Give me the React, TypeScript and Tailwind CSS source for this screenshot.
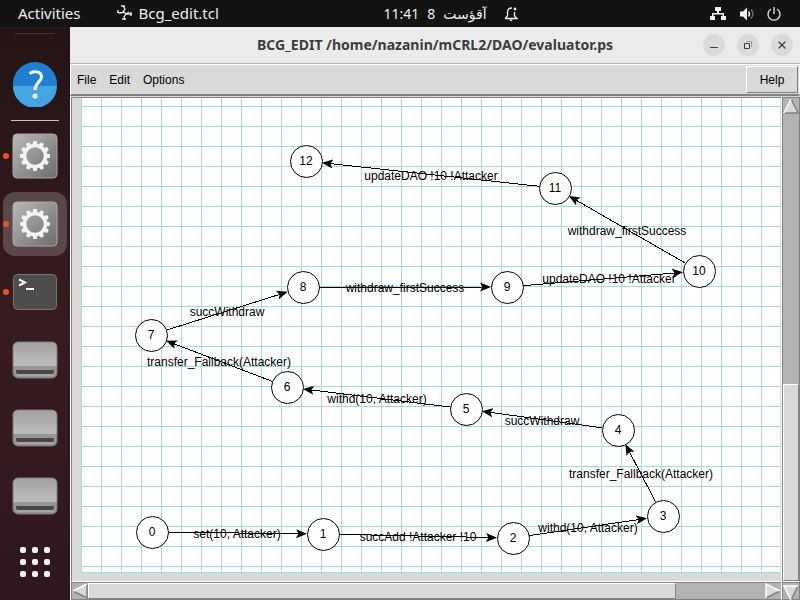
import type { ReactNode } from "react";
import { X } from "lucide-react";

type GraphNode = { id: number; x: number; y: number };
type GraphEdge = { from: number; to: number; label: string; x: number; y: number };

const nodes: GraphNode[] = [
  { id: 0, x: 71, y: 434 },
  { id: 1, x: 242, y: 436 },
  { id: 2, x: 432, y: 440 },
  { id: 3, x: 582, y: 418 },
  { id: 4, x: 537, y: 332 },
  { id: 5, x: 385, y: 311 },
  { id: 6, x: 206, y: 289 },
  { id: 7, x: 70, y: 237 },
  { id: 8, x: 222, y: 189 },
  { id: 9, x: 426, y: 189 },
  { id: 10, x: 618, y: 173 },
  { id: 11, x: 474, y: 90 },
  { id: 12, x: 225, y: 63 },
];

const edges: GraphEdge[] = [
  { from: 0, to: 1, label: "set(10, Attacker)", x: 156, y: 440 },
  { from: 1, to: 2, label: "succAdd !Attacker !10", x: 337, y: 443 },
  { from: 2, to: 3, label: "withd(10, Attacker)", x: 507, y: 434 },
  { from: 3, to: 4, label: "transfer_Fallback(Attacker)", x: 560, y: 380 },
  { from: 4, to: 5, label: "succWithdraw", x: 461, y: 327 },
  { from: 5, to: 6, label: "withd(10, Attacker)", x: 296, y: 305 },
  { from: 6, to: 7, label: "transfer_Fallback(Attacker)", x: 138, y: 268 },
  { from: 7, to: 8, label: "succWithdraw", x: 146, y: 218 },
  { from: 8, to: 9, label: "withdraw_firstSuccess", x: 324, y: 194 },
  { from: 9, to: 10, label: "updateDAO !10 !Attacker", x: 528, y: 185 },
  { from: 10, to: 11, label: "withdraw_firstSuccess", x: 546, y: 137 },
  { from: 11, to: 12, label: "updateDAO !10 !Attacker", x: 350, y: 82 },
];

const RADIUS = 16;

function Edge({ edge }: { edge: GraphEdge }) {
  const a = nodes[edge.from];
  const b = nodes[edge.to];
  const length = Math.hypot(b.x - a.x, b.y - a.y);
  const ux = (b.x - a.x) / length;
  const uy = (b.y - a.y) / length;
  return (
    <g>
      <line
        x1={a.x + ux * RADIUS}
        y1={a.y + uy * RADIUS}
        x2={b.x - ux * (RADIUS + 4)}
        y2={b.y - uy * (RADIUS + 4)}
        stroke="black"
        markerEnd="url(#arrow)"
        shapeRendering="crispEdges"
      />
      <text x={edge.x} y={edge.y} textAnchor="middle">
        {edge.label}
      </text>
    </g>
  );
}

function Graph() {
  return (
    <svg
      role="img"
      aria-label="Transition graph"
      className="block h-full w-full bg-white font-['Liberation_Sans',Arial,sans-serif] text-xs"
    >
      <defs>
        <pattern id="grid" width="20" height="20" y="8" patternUnits="userSpaceOnUse">
          <path d="M0 .5H20M.5 0V20" stroke="#a8d8e2" fill="none" />
        </pattern>
        <marker
          id="arrow"
          markerUnits="userSpaceOnUse"
          markerWidth="12"
          markerHeight="10"
          refX="7"
          refY="5"
          orient="auto"
        >
          <path d="M0 .5L11 5L0 9.5L2.5 5Z" />
        </marker>
      </defs>
      <rect width="100%" height="100%" fill="url(#grid)" />
      {edges.map((edge) => (
        <Edge key={edge.from} edge={edge} />
      ))}
      {nodes.map((node) => (
        <g key={node.id}>
          <circle cx={node.x + 0.5} cy={node.y + 0.5} r={RADIUS} fill="white" stroke="black" />
          <text x={node.x} y={node.y + 4} textAnchor="middle">
            {node.id}
          </text>
        </g>
      ))}
    </svg>
  );
}

function BranchIcon() {
  return (
    <svg viewBox="0 0 16 16" className="size-4" fill="none" stroke="#eeeeee" strokeWidth="1.3">
      <path d="M6 1L8 4L6 7M4 1H8M0 7L3 8L7 7L9 9H15M9 9L12 7M9 9L7 12L8 15M5 14H9M1 5V8M14 7V11" />
    </svg>
  );
}

function BellIcon() {
  return (
    <svg viewBox="0 0 16 16" className="size-4" fill="none" stroke="#f0f0f0" strokeWidth="1.3">
      <path d="M2 12.500L4.500 10V6C4.500 3 6 2 9 2M11.500 6V10L14 12.500H2" />
      <circle cx="12" cy="3" r="1.4" fill="#f0f0f0" stroke="none" />
      <path d="M6 13.5H10L8 15.5Z" fill="#f0f0f0" stroke="none" />
    </svg>
  );
}

function NetworkIcon() {
  return (
    <svg viewBox="0 0 16 16" className="size-4" fill="#f0f0f0">
      <path d="M5 1H11V5H9V7H14V10H16V14H11V10H12.5V8.5H3.5V10H5V14H0V10H2V7H7V5H5Z" />
    </svg>
  );
}

function VolumeIcon() {
  return (
    <svg viewBox="0 0 16 16" className="size-4" fill="none">
      <path d="M2 5.500H5L9 1.500V14.500L5 10.500H2Z" fill="#f0f0f0" />
      <path d="M10.500 5.500Q12.500 8 10.500 10.500" stroke="#f0f0f0" strokeWidth="1.500" />
      <path d="M13 3.500Q17 8 13 12.500" stroke="#777" strokeWidth="1.300" />
    </svg>
  );
}

function PowerIcon() {
  return (
    <svg viewBox="0 0 16 16" className="size-4" fill="none" stroke="#f0f0f0" strokeWidth="1.300">
      <path d="M5 3A6 6 0 1 0 11 3M8 1V8" />
    </svg>
  );
}

function TopBar() {
  return (
    <header className="grid h-[27px] shrink-0 grid-cols-3 items-center bg-[#131313] text-sm text-[#eeeeee]">
      <div className="flex items-center gap-9 pl-[18px] text-[15px]">
        <button type="button">Activities</button>
        <button type="button" className="flex items-center gap-1.5 whitespace-nowrap">
          <BranchIcon />
          Bcg_edit.tcl
        </button>
      </div>
      <button type="button" className="flex items-center justify-center gap-2 whitespace-nowrap pl-[102px]">
        <span>11:41</span>
        <span>8</span>
        <span dir="rtl" lang="az">آقؤست</span>
        <span className="pl-2"><BellIcon /></span>
      </button>
      <div className="flex items-center justify-end gap-3 pr-[18px]">
        <button type="button" aria-label="Network"><NetworkIcon /></button>
        <button type="button" aria-label="Volume"><VolumeIcon /></button>
        <button type="button" aria-label="Power"><PowerIcon /></button>
      </div>
    </header>
  );
}

const teeth = Array.from({ length: 12 }, (_, i) => i * 30);

function GearIcon() {
  return (
    <svg viewBox="0 0 46 46" className="size-[46px]">
      <defs>
        <linearGradient id="metal" x1="0" y1="0" x2="1" y2="1">
          <stop offset="0" stopColor="#b9b9b9" />
          <stop offset="1" stopColor="#6c6c6c" />
        </linearGradient>
      </defs>
      <rect x="1" y="1" width="44" height="44" rx="4" fill="url(#metal)" stroke="#aaa" />
      <circle cx="23" cy="23" r="10.500" fill="none" stroke="#f4f3f0" strokeWidth="3.500" />
      {teeth.map((angle) => (
        <path
          key={angle}
          d="M20.500 12L21.300 8H24.700L25.500 12Z"
          fill="#f4f3f0"
          transform={`rotate(${angle} 23 23)`}
        />
      ))}
    </svg>
  );
}

function DriveIcon() {
  return (
    <svg viewBox="0 0 46 38" className="h-[38px] w-[46px]">
      <defs>
        <linearGradient id="drive" x1="0" y1="0" x2="0" y2="1">
          <stop offset="0" stopColor="#a2a2a2" />
          <stop offset="1" stopColor="#bcbcbc" />
        </linearGradient>
      </defs>
      <rect x="1" y="1" width="44" height="36" rx="5" fill="#969696" stroke="#777" />
      <path d="M1.500 25V6Q1.500 1.500 6 1.500H40Q44.500 1.500 44.500 6V25Z" fill="url(#drive)" />
      <path d="M4 29H42V31Q42 33 40 33H6Q4 33 4 31Z" fill="#474747" />
      <path d="M5 34H41" stroke="#b5b5b5" />
    </svg>
  );
}

function TerminalIcon() {
  return (
    <svg viewBox="0 0 46 38" className="h-[38px] w-[46px]">
      <rect x="1.500" y="1.500" width="43" height="35" rx="4" fill="#4c4c4c" stroke="#777" />
      <path d="M7 6.500L13 9.500L7 12.500M14 16H22" fill="none" stroke="white" strokeWidth="2" />
    </svg>
  );
}

function HelpIcon() {
  return (
    <svg viewBox="0 0 46 46" className="size-[46px]">
      <circle cx="23" cy="23" r="22" fill="#1f80d3" />
      <path d="M1 25A22 22 0 0 0 45 25Z" fill="#45a4e3" />
      <path
        d="M17.500 12.500C21 10 29.500 9.500 29.500 16C29.500 21 23 21.500 23 29"
        fill="none"
        stroke="white"
        strokeWidth="3"
      />
      <circle cx="23" cy="35" r="2.500" fill="white" />
    </svg>
  );
}

function DockItem({
  label,
  running = false,
  active = false,
  children,
}: {
  label: string;
  running?: boolean;
  active?: boolean;
  children: ReactNode;
}) {
  return (
    <div className="flex h-[68px] w-full shrink-0 items-center">
      <span
        className={running ? "z-10 ml-[3px] size-1.5 rounded-full bg-[#e95420]" : "ml-[3px] w-1.5"}
      />
      <button
        type="button"
        aria-label={label}
        className={
          active
            ? "-ml-1.5 flex size-16 items-center justify-center rounded-xl bg-white/20"
            : "-ml-1.5 flex size-16 items-center justify-center"
        }
      >
        {children}
      </button>
    </div>
  );
}

function Dock() {
  return (
    <nav className="flex w-[70px] shrink-0 flex-col items-center bg-linear-to-b from-[#231414] via-[#371c1f] to-[#2d1820]">
      <div className="mt-[6px] h-px w-10 shrink-0 bg-[#4d2c25]" />
      <div className="mt-4 flex w-full flex-col">
        <DockItem label="Help"><HelpIcon /></DockItem>
      </div>
      <hr className="mt-0.5 w-12 border-[#c9c2c0]" />
      <div className="mt-px flex w-full flex-col">
        <DockItem label="Bcg edit" running><GearIcon /></DockItem>
        <DockItem label="Bcg edit window" running active><GearIcon /></DockItem>
        <DockItem label="Terminal" running><TerminalIcon /></DockItem>
        <DockItem label="Drive 1"><DriveIcon /></DockItem>
        <DockItem label="Drive 2"><DriveIcon /></DockItem>
        <DockItem label="Drive 3"><DriveIcon /></DockItem>
      </div>
      <button type="button" aria-label="Show applications" className="mt-[17px] grid grid-cols-3 gap-1.5">
        {Array.from({ length: 9 }, (_, i) => (
          <span key={i} className="size-1.5 rounded-[2px] bg-[#f2f0f0]" />
        ))}
      </button>
    </nav>
  );
}

function TitleBar() {
  const round = "flex size-[22px] items-center justify-center rounded-full bg-[#dadada] text-[#3d3d3d]";
  return (
    <div className="grid h-[37px] shrink-0 grid-cols-[1fr_auto_1fr] items-center border-b border-[#b6b6b6] bg-[#ebebeb]">
      <h1 className="col-start-2 whitespace-nowrap text-sm font-bold text-[#3d3d3d]">
        BCG_EDIT /home/nazanin/mCRL2/DAO/evaluator.ps
      </h1>
      <div className="flex justify-end gap-3 pr-[7px]">
        <button type="button" aria-label="Minimize" className={round}>
          <span className="mt-1 h-px w-2 bg-[#3d3d3d]" />
        </button>
        <button type="button" aria-label="Restore" className={round}>
          <svg viewBox="0 0 8 8" className="size-2" fill="none" stroke="currentColor">
            <path d="M.5 2.500H5.500V7.500H.5Z" />
            <path d="M2 .5H7.500V6" stroke="#999" />
          </svg>
        </button>
        <button type="button" aria-label="Close" className={round}>
          <X className="size-3" strokeWidth={2.5} />
        </button>
      </div>
    </div>
  );
}

function MenuBar() {
  return (
    <div className="flex h-8 shrink-0 items-center border border-b-2 border-white border-b-[#828282] bg-[#d9d9d9] font-['Liberation_Sans',Arial,sans-serif] text-xs text-black">
      <div className="flex gap-[13px] pl-1.5">
        <button type="button">File</button>
        <button type="button">Edit</button>
        <button type="button">Options</button>
      </div>
      <button
        type="button"
        className="ml-auto mr-px h-[27px] w-[52px] border border-b-[#828282] border-l-white border-r-[#828282] border-t-white"
      >
        Help
      </button>
    </div>
  );
}

function ScrollArrow({ direction }: { direction: "up" | "down" | "left" | "right" }) {
  const shapes = {
    up: ["M8 1L1 15", "M1 15H15L8 1"],
    down: ["M15 1H1L8 15", "M8 15L15 1"],
    left: ["M15 1L1 8", "M1 8L15 15V1"],
    right: ["M1 15V1L15 8", "M15 8L1 15"],
  };
  const [light, dark] = shapes[direction];
  const body = {
    up: "M8 1L15 15H1Z",
    down: "M1 1H15L8 15Z",
    left: "M15 1V15L1 8Z",
    right: "M1 1L15 8L1 15Z",
  };
  return (
    <button type="button" aria-label={`Scroll ${direction}`} className="size-4 shrink-0">
      <svg viewBox="0 0 16 16" className="size-4" fill="none" strokeWidth="1.500">
        <path d={body[direction]} fill="#d9d9d9" />
        <path d={dark} stroke="#828282" />
        <path d={light} stroke="white" />
      </svg>
    </button>
  );
}

export default function App() {
  return (
    <div className="flex h-screen flex-col overflow-hidden font-['Noto_Sans','DejaVu_Sans',sans-serif]">
      <TopBar />
      <div className="flex min-h-0 flex-1">
        <Dock />
        <main className="flex min-w-0 flex-1 flex-col bg-[#d9d9d9]">
          <TitleBar />
          <MenuBar />
          <div className="grid min-h-0 flex-1 grid-cols-[1fr_18px] grid-rows-[1fr_18px] border-l border-white pt-px">
            <div className="min-h-0 min-w-0 border border-b-white border-l-[#828282] border-r-white border-t-[#828282] pb-2 pl-[9px] pr-px">
              <div className="h-full border-b border-[#a8d8e2]">
                <Graph />
              </div>
            </div>
            <div className="flex flex-col border border-b-white border-l-[#828282] border-r-[#828282] border-t-[#828282] bg-[#b3b3b3]">
              <ScrollArrow direction="up" />
              <div className="min-h-0 flex-[271]" />
              <div className="min-h-0 flex-[196] border border-b-[#828282] border-l-white border-r-[#828282] border-t-white bg-[#d9d9d9]" />
            </div>
            <div className="flex border border-b-[#828282] border-l-[#828282] border-r-white border-t-[#828282] bg-[#b3b3b3]">
              <ScrollArrow direction="left" />
              <div className="min-w-0 flex-[588] border border-b-[#828282] border-l-white border-r-[#828282] border-t-white bg-[#d9d9d9]" />
              <div className="min-w-0 flex-[89]" />
              <ScrollArrow direction="right" />
            </div>
            <div className="border border-[#828282] bg-[#b3b3b3]">
              <ScrollArrow direction="down" />
            </div>
          </div>
        </main>
      </div>
    </div>
  );
}
